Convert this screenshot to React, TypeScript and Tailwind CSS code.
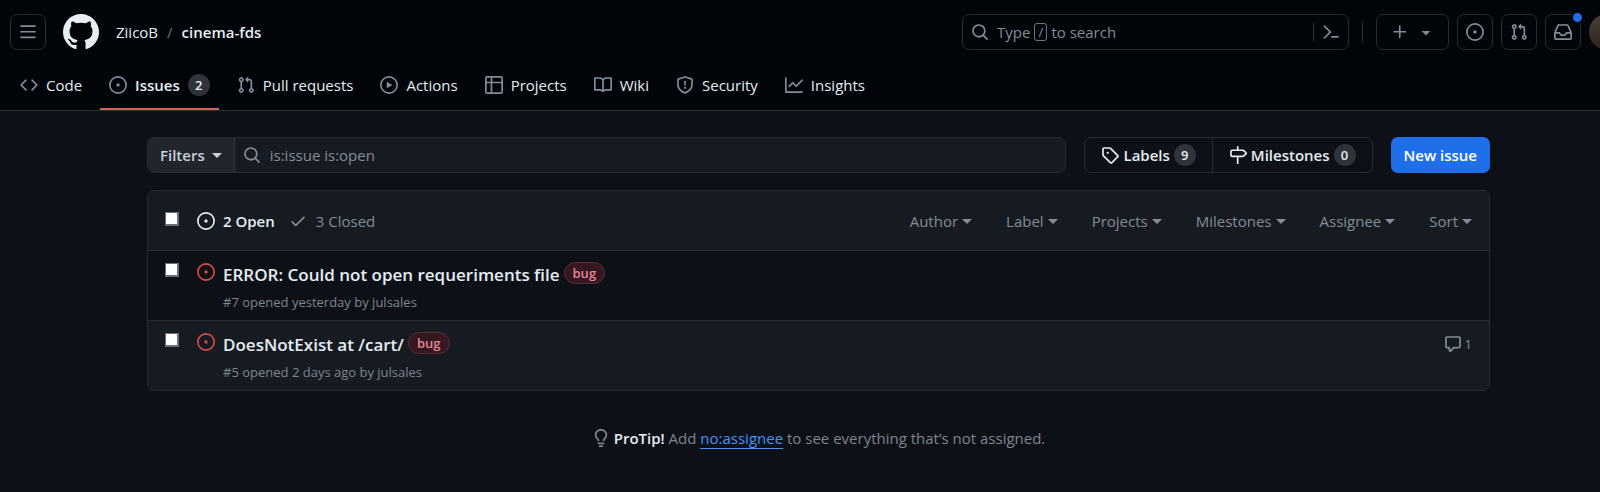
import React from "react";

const paths = {
  mark: "M8 0c4.42 0 8 3.58 8 8a8.013 8.013 0 0 1-5.45 7.59c-.4.08-.55-.17-.55-.38 0-.27.01-1.13.01-2.2 0-.75-.25-1.23-.54-1.48 1.78-.2 3.65-.88 3.65-3.95 0-.88-.31-1.59-.82-2.15.08-.2.36-1.02-.08-2.12 0 0-.67-.22-2.2.82-.64-.18-1.32-.27-2-.27-.68 0-1.36.09-2 .27-1.53-1.03-2.2-.82-2.2-.82-.44 1.1-.16 1.92-.08 2.12-.51.56-.82 1.28-.82 2.15 0 3.06 1.86 3.75 3.64 3.95-.23.2-.44.55-.51 1.07-.46.21-1.61.55-2.33-.66-.15-.24-.6-.83-1.23-.82-.67.01-.27.38.01.53.34.19.73.9.82 1.13.16.45.68 1.31 2.69.94 0 .67.01 1.3.01 1.49 0 .21-.15.45-.55.38A7.995 7.995 0 0 1 0 8c0-4.42 3.58-8 8-8Z",
  bars: "M1 2.75A.75.75 0 0 1 1.75 2h12.5a.75.75 0 0 1 0 1.5H1.75A.75.75 0 0 1 1 2.75Zm0 5A.75.75 0 0 1 1.75 7h12.5a.75.75 0 0 1 0 1.5H1.75A.75.75 0 0 1 1 7.75ZM1.75 12h12.5a.75.75 0 0 1 0 1.5H1.75a.75.75 0 0 1 0-1.5Z",
  code: "m11.28 3.22 4.25 4.25a.75.75 0 0 1 0 1.06l-4.25 4.25a.749.749 0 0 1-1.275-.326.749.749 0 0 1 .215-.734L13.94 8l-3.72-3.72a.749.749 0 0 1 .326-1.275.749.749 0 0 1 .734.215Zm-6.56 0a.751.751 0 0 1 1.042.018.751.751 0 0 1 .018 1.042L2.06 8l3.72 3.72a.749.749 0 0 1-.326 1.275.749.749 0 0 1-.734-.215L.47 8.53a.75.75 0 0 1 0-1.06Z",
  issue: "M8 9.5a1.5 1.5 0 1 0 0-3 1.5 1.5 0 0 0 0 3ZM8 0a8 8 0 1 1 0 16A8 8 0 0 1 8 0ZM1.5 8a6.5 6.5 0 1 0 13 0 6.5 6.5 0 0 0-13 0Z",
  pull: "M1.5 3.25a2.25 2.25 0 1 1 3 2.122v5.256a2.251 2.251 0 1 1-1.5 0V5.372A2.25 2.25 0 0 1 1.5 3.25Zm5.677-.177L9.573.677A.25.25 0 0 1 10 .854V2.5h1A2.5 2.5 0 0 1 13.5 5v5.628a2.251 2.251 0 1 1-1.5 0V5a1 1 0 0 0-1-1h-1v1.646a.25.25 0 0 1-.427.177L7.177 3.427a.25.25 0 0 1 0-.354ZM3.75 2.5a.75.75 0 1 0 0 1.5.75.75 0 0 0 0-1.5Zm0 9.5a.75.75 0 1 0 0 1.5.75.75 0 0 0 0-1.5Zm8.25.75a.75.75 0 1 0 1.5 0 .75.75 0 0 0-1.5 0Z",
  play: "M8 0a8 8 0 1 1 0 16A8 8 0 0 1 8 0ZM1.5 8a6.5 6.5 0 1 0 13 0 6.5 6.5 0 0 0-13 0Zm4.879-2.773 4.264 2.559a.25.25 0 0 1 0 .428l-4.264 2.559A.25.25 0 0 1 6 10.559V5.442a.25.25 0 0 1 .379-.215Z",
  table: "M0 1.75C0 .784.784 0 1.75 0h12.5C15.216 0 16 .784 16 1.75v12.5A1.75 1.75 0 0 1 14.25 16H1.75A1.75 1.75 0 0 1 0 14.25ZM6.5 6.5v8h7.75a.25.25 0 0 0 .25-.25V6.5Zm8-1.5V1.75a.25.25 0 0 0-.25-.25H6.5V5Zm-13 1.5v7.75c0 .138.112.25.25.25H5v-8ZM5 5V1.5H1.75a.25.25 0 0 0-.25.25V5Z",
  book: "M0 1.75A.75.75 0 0 1 .75 1h4.253c1.227 0 2.317.59 3 1.501A3.743 3.743 0 0 1 11.006 1h4.245a.75.75 0 0 1 .75.75v10.5a.75.75 0 0 1-.75.75h-4.507a2.25 2.25 0 0 0-1.591.659l-.622.621a.75.75 0 0 1-1.06 0l-.622-.621A2.25 2.25 0 0 0 5.258 13H.75a.75.75 0 0 1-.75-.75Zm7.251 10.324.004-5.073-.002-2.253A2.25 2.25 0 0 0 5.003 2.5H1.5v9h3.757a3.75 3.75 0 0 1 1.994.574ZM8.755 4.75l-.004 7.322a3.752 3.752 0 0 1 1.992-.572H14.5v-9h-3.495a2.25 2.25 0 0 0-2.25 2.25Z",
  shield: "M7.467.133a1.748 1.748 0 0 1 1.066 0l5.25 1.68A1.75 1.75 0 0 1 15 3.48V7c0 1.566-.32 3.182-1.303 4.682-.983 1.498-2.585 2.813-5.032 3.855a1.697 1.697 0 0 1-1.33 0c-2.447-1.042-4.049-2.357-5.032-3.855C1.32 10.182 1 8.566 1 7V3.48a1.75 1.75 0 0 1 1.217-1.667Zm.61 1.429a.25.25 0 0 0-.153 0l-5.25 1.68a.25.25 0 0 0-.174.238V7c0 1.358.275 2.666 1.057 3.86.784 1.194 2.121 2.34 4.366 3.297a.196.196 0 0 0 .154 0c2.245-.956 3.582-2.104 4.366-3.298C13.225 9.666 13.5 8.36 13.5 7V3.48a.251.251 0 0 0-.174-.237l-5.25-1.68ZM8.75 4.75v3a.75.75 0 0 1-1.5 0v-3a.75.75 0 0 1 1.5 0ZM9 10.5a1 1 0 1 1-2 0 1 1 0 0 1 2 0Z",
  graph: "M1.5 1.75V13.5h13.75a.75.75 0 0 1 0 1.5H.75a.75.75 0 0 1-.75-.75V1.75a.75.75 0 0 1 1.5 0Zm14.28 2.53-5.25 5.25a.75.75 0 0 1-1.06 0L7 7.06 4.28 9.78a.751.751 0 0 1-1.042-.018.751.751 0 0 1-.018-1.042l3.25-3.25a.75.75 0 0 1 1.06 0L10 7.94l4.72-4.72a.751.751 0 0 1 1.042.018.751.751 0 0 1 .018 1.042Z",
  search: "M10.68 11.74a6 6 0 0 1-7.922-8.982 6 6 0 0 1 8.982 7.922l3.04 3.04a.749.749 0 0 1-.326 1.275.749.749 0 0 1-.734-.215ZM11.5 7a4.499 4.499 0 1 0-8.997 0A4.499 4.499 0 0 0 11.5 7Z",
  command: "m6.354 8.04-4.773 4.773a.75.75 0 1 0 1.061 1.06L7.945 8.57a.75.75 0 0 0 0-1.06L2.642 2.206a.75.75 0 0 0-1.06 1.061L6.353 8.04ZM8.75 11.5a.75.75 0 0 0 0 1.5h5.5a.75.75 0 0 0 0-1.5h-5.5Z",
  plus: "M7.75 2a.75.75 0 0 1 .75.75V7h4.25a.75.75 0 0 1 0 1.5H8.5v4.25a.75.75 0 0 1-1.5 0V8.5H2.75a.75.75 0 0 1 0-1.5H7V2.75A.75.75 0 0 1 7.75 2Z",
  triangle: "m4.427 7.427 3.396 3.396a.25.25 0 0 0 .354 0l3.396-3.396A.25.25 0 0 0 11.396 7H4.604a.25.25 0 0 0-.177.427Z",
  inbox: "M2.8 2.06A1.75 1.75 0 0 1 4.41 1h7.18c.7 0 1.333.417 1.61 1.06l2.74 6.395c.04.093.06.194.06.295v4.5A1.75 1.75 0 0 1 14.25 15H1.75A1.75 1.75 0 0 1 0 13.25v-4.5c0-.101.02-.202.06-.295Zm1.61.44a.25.25 0 0 0-.23.152L1.887 8H4.75a.75.75 0 0 1 .6.3L6.625 10h2.75l1.275-1.7a.75.75 0 0 1 .6-.3h2.863L11.82 2.652a.25.25 0 0 0-.23-.152Zm10.09 7h-2.875l-1.275 1.7a.75.75 0 0 1-.6.3h-3.5a.75.75 0 0 1-.6-.3L4.375 9.5H1.5v3.75c0 .138.112.25.25.25h12.5a.25.25 0 0 0 .25-.25Z",
  tag: "M1 7.775V2.75C1 1.784 1.784 1 2.75 1h5.025c.464 0 .91.184 1.238.513l6.25 6.25a1.75 1.75 0 0 1 0 2.474l-5.026 5.026a1.75 1.75 0 0 1-2.474 0l-6.25-6.25A1.752 1.752 0 0 1 1 7.775Zm1.5 0c0 .066.026.13.073.177l6.25 6.25a.25.25 0 0 0 .354 0l5.025-5.025a.25.25 0 0 0 0-.354l-6.25-6.25a.25.25 0 0 0-.177-.073H2.75a.25.25 0 0 0-.25.25ZM6 5a1 1 0 1 1 0 2 1 1 0 0 1 0-2Z",
  milestone: "M7.75 0a.75.75 0 0 1 .75.75V3h3.634c.414 0 .814.147 1.13.414l2.07 1.75a1.75 1.75 0 0 1 0 2.672l-2.07 1.75a1.75 1.75 0 0 1-1.13.414H8.5v5.25a.75.75 0 0 1-1.5 0V10H2.75A1.75 1.75 0 0 1 1 8.25v-3.5C1 3.784 1.784 3 2.75 3H7V.75A.75.75 0 0 1 7.75 0Zm4.384 8.5a.25.25 0 0 0 .161-.06l2.07-1.75a.248.248 0 0 0 0-.38l-2.07-1.75a.25.25 0 0 0-.161-.06H2.75a.25.25 0 0 0-.25.25v3.5c0 .138.112.25.25.25h9.384Z",
  check: "M13.78 4.22a.75.75 0 0 1 0 1.06l-7.25 7.25a.75.75 0 0 1-1.06 0L2.22 9.28a.751.751 0 0 1 .018-1.042.751.751 0 0 1 1.042-.018L6 10.94l6.72-6.72a.75.75 0 0 1 1.06 0Z",
  comment: "M1 2.75C1 1.784 1.784 1 2.75 1h10.5c.966 0 1.75.784 1.75 1.75v7.5A1.75 1.75 0 0 1 13.25 12H9.06l-2.573 2.573A1.458 1.458 0 0 1 4 13.543V12H2.75A1.75 1.75 0 0 1 1 10.25Zm1.75-.25a.25.25 0 0 0-.25.25v7.5c0 .138.112.25.25.25h2a.75.75 0 0 1 .75.75v2.19l2.72-2.72a.749.749 0 0 1 .53-.22h4.5a.25.25 0 0 0 .25-.25v-7.5a.25.25 0 0 0-.25-.25Z",
  bulb: "M8 1.5c-2.363 0-4 1.69-4 3.75 0 .984.424 1.625.984 2.304l.214.253c.223.264.47.556.673.848.284.411.537.896.621 1.49a.75.75 0 0 1-1.484.211c-.04-.282-.163-.547-.37-.847a8.456 8.456 0 0 0-.542-.68c-.084-.1-.173-.205-.268-.32C3.201 7.75 2.5 6.766 2.5 5.25 2.5 2.31 4.863 0 8 0s5.5 2.31 5.5 5.25c0 1.516-.701 2.5-1.328 3.259-.095.115-.184.22-.268.319-.207.245-.383.453-.541.681-.208.3-.33.565-.37.847a.751.751 0 0 1-1.485-.212c.084-.593.337-1.078.621-1.489.203-.292.45-.584.673-.848.075-.088.147-.173.213-.253.561-.679.985-1.32.985-2.304 0-2.06-1.637-3.75-4-3.75ZM5.75 12h4.5a.75.75 0 0 1 0 1.5h-4.5a.75.75 0 0 1 0-1.5ZM6 15.25a.75.75 0 0 1 .75-.75h2.5a.75.75 0 0 1 0 1.5h-2.5a.75.75 0 0 1-.75-.75Z",
};

type IconName = keyof typeof paths;

function Icon({ name, className = "size-[18px]" }: { name: IconName; className?: string }) {
  return (
    <svg viewBox="0 0 16 16" fill="currentColor" aria-hidden="true" className={`shrink-0 ${className}`}>
      <path d={paths[name]} />
    </svg>
  );
}

function Caret() {
  return <span aria-hidden="true" className="mt-px border-x-[5px] border-t-[5px] border-x-transparent border-t-current" />;
}

function Checkbox({ label, className = "" }: { label: string; className?: string }) {
  return (
    <input
      type="checkbox"
      aria-label={label}
      className={`size-[14px] shrink-0 appearance-none border border-r-2 border-b-2 border-[#6b6f75] bg-white ${className}`}
    />
  );
}

function IconButton({ name, label, children }: { name: IconName; label: string; children?: React.ReactNode }) {
  return (
    <button
      type="button"
      aria-label={label}
      className="relative flex size-9 shrink-0 items-center justify-center rounded-[7px] border border-[#272b31] text-[#848d97]"
    >
      <Icon name={name} />
      {children}
    </button>
  );
}

const tabs: { icon: IconName; label: string; count?: number }[] = [
  { icon: "code", label: "Code" },
  { icon: "issue", label: "Issues", count: 2 },
  { icon: "pull", label: "Pull requests" },
  { icon: "play", label: "Actions" },
  { icon: "table", label: "Projects" },
  { icon: "book", label: "Wiki" },
  { icon: "shield", label: "Security" },
  { icon: "graph", label: "Insights" },
];

const filters = ["Author", "Label", "Projects", "Milestones", "Assignee", "Sort"];

const issues = [
  { id: 7, title: "ERROR: Could not open requeriments file", when: "yesterday", comments: 0 },
  { id: 5, title: "DoesNotExist at /cart/", when: "2 days ago", comments: 1 },
];

function Counter({ value }: { value: number }) {
  return (
    <span className="flex h-[22px] min-w-[22px] items-center justify-center rounded-full bg-[#2f343b] px-1 text-[13px] leading-5 font-semibold text-[#e6edf3]">
      {value}
    </span>
  );
}

function Header() {
  return (
    <header className="overflow-hidden border-b border-[#2b3036] bg-[#010409]">
      <div className="flex items-center pt-[14px] pl-[10px]">
        <IconButton name="bars" label="Open menu" />
        <a href="#home" aria-label="Homepage" className="ml-[17px] text-[#e6edf3]">
          <Icon name="mark" className="size-9" />
        </a>
        <nav aria-label="Breadcrumb" className="ml-[17px] flex items-center gap-[9px]">
          <a href="#owner">ZiicoB</a>
          <span className="text-[#6e7681]">/</span>
          <a href="#repo" className="font-semibold">cinema-fds</a>
        </nav>
        <div className="ml-auto flex h-9 w-[387px] shrink-0 items-center rounded-[7px] border border-[#272b31] text-[#848d97]">
          <button type="button" className="flex flex-1 items-center gap-2 pl-2 text-left">
            <Icon name="search" />
            <span className="flex items-center gap-1">
              Type
              <kbd className="flex h-[18px] w-[13px] items-center justify-center rounded-[3px] border border-[#6e7681] font-[inherit] text-[13px]">/</kbd>
              to search
            </span>
          </button>
          <button type="button" aria-label="Command palette" className="flex h-[18px] items-center border-l border-[#30363d] px-2">
            <Icon name="command" />
          </button>
        </div>
        <div className="mx-[13px] h-[22px] w-px shrink-0 bg-[#272b31]" />
        <div className="flex shrink-0 items-center gap-2">
          <button
            type="button"
            aria-label="Create new"
            className="flex h-9 w-[73px] items-center justify-center gap-2 rounded-[7px] border border-[#272b31] text-[#848d97]"
          >
            <Icon name="plus" />
            <Icon name="triangle" />
          </button>
          <IconButton name="issue" label="Your issues" />
          <IconButton name="pull" label="Your pull requests" />
          <IconButton name="inbox" label="Notifications">
            <span className="absolute -top-[4px] -right-[4px] size-[13px] rounded-full border-2 border-[#010409] bg-[#1f6feb]" />
          </IconButton>
        </div>
        <button
          type="button"
          aria-label="Open user menu"
          className="-mr-[25px] ml-2 size-9 shrink-0 rounded-full bg-linear-to-b from-[#4a3f38] to-[#2c2420]"
        />
      </div>
      <nav aria-label="Repository" className="mt-[9px] flex gap-[9px] px-[11px]">
        {tabs.map((tab) => (
          <a
            key={tab.label}
            href={`#${tab.label.toLowerCase().replace(" ", "-")}`}
            className={`flex h-[51px] items-center gap-2 border-b-2 px-[9px] pt-[2px] ${
              tab.count ? "border-[#c9695a] font-semibold" : "border-transparent"
            }`}
          >
            <Icon name={tab.icon} className="size-[18px] text-[#848d97]" />
            {tab.label}
            {tab.count ? <Counter value={tab.count} /> : null}
          </a>
        ))}
      </nav>
    </header>
  );
}

export default function App() {
  return (
    <div className="min-h-screen bg-[#0d1117] font-['Open_Sans','Noto_Sans',sans-serif] text-[15px] leading-6 text-[#e6edf3]">
      <Header />
      <main className="pt-[26px] pr-[110px] pb-9 pl-[147px]">
        <div className="flex items-stretch gap-[18px]">
          <form className="flex h-9 flex-1 overflow-hidden rounded-[7px] border border-[#272c33]">
            <button
              type="button"
              className="flex items-center gap-[7px] border-r border-[#30363d] bg-[#21262d] px-3 font-semibold text-[#c9d1d9]"
            >
              Filters
              <Caret />
            </button>
            <label className="flex flex-1 items-center gap-[9px] bg-[#161b22] pl-2 text-[#848d97]">
              <Icon name="search" />
              <span className="hidden">Search all issues</span>
              <input
                type="text"
                aria-label="Search all issues"
                defaultValue="is:issue is:open"
                className="h-full min-w-0 flex-1 bg-transparent outline-none"
              />
            </label>
          </form>
          <nav aria-label="Issue metadata" className="flex rounded-[7px] border border-[#272c33] font-semibold">
            <a href="#labels" className="flex items-center gap-1 border-r border-[#272c33] px-4">
              <Icon name="tag" />
              Labels
              <Counter value={9} />
            </a>
            <a href="#milestones" className="flex items-center gap-1 px-4">
              <Icon name="milestone" />
              Milestones
              <Counter value={0} />
            </a>
          </nav>
          <a href="#new" className="flex items-center rounded-[7px] bg-[#1f6feb] px-[13px] font-semibold text-white">
            New issue
          </a>
        </div>

        <section aria-label="Issues" className="mt-[17px] overflow-hidden rounded-[7px] border border-[#272c33]">
          <div className="flex h-[59px] items-center bg-[#161b22] px-[17px]">
            <Checkbox label="Select all issues" className="mb-1" />
            <a href="#open" className="ml-[18px] flex items-center gap-2 font-semibold">
              <Icon name="issue" />
              2 Open
            </a>
            <a href="#closed" className="ml-[14px] flex items-center gap-[9px] text-[#848d97]">
              <Icon name="check" />
              3 Closed
            </a>
            <div className="ml-auto flex gap-[34px] text-[#848d97]">
              {filters.map((filter) => (
                <button key={filter} type="button" className="flex items-center gap-1">
                  {filter}
                  <Caret />
                </button>
              ))}
            </div>
          </div>
          <ul>
            {issues.map((issue) => (
              <li key={issue.id} className="flex h-[70px] items-start border-t border-[#272c33] px-[17px] pt-[11px] even:bg-[#161b22]">
                <Checkbox label={`Select issue ${issue.id}`} className="mt-px" />
                <Icon name="issue" className="mt-px ml-[18px] size-[18px] text-[#da4b48]" />
                <div className="ml-2">
                  <div className="flex items-center gap-1">
                    <a href={`#issue-${issue.id}`} className="text-[17px] leading-[26px] font-semibold">
                      {issue.title}
                    </a>
                    <a
                      href="#bug"
                      className="mb-1 flex h-[22px] items-center rounded-full border border-[#5b2d39] bg-[#35181f] px-2 text-[13px] leading-5 font-semibold text-[#e5849a]"
                    >
                      bug
                    </a>
                  </div>
                  <p className="mt-1 text-[13px] leading-5 text-[#7d8590]">
                    #{issue.id} opened {issue.when} by <a href="#julsales">julsales</a>
                  </p>
                </div>
                {issue.comments > 0 && (
                  <a href="#comments" aria-label="1 comment" className="ml-auto flex items-center gap-[3px] text-[13px] text-[#848d97]">
                    <Icon name="comment" />
                    {issue.comments}
                  </a>
                )}
              </li>
            ))}
          </ul>
        </section>

        <p className="mt-[35px] flex items-center justify-center gap-1 text-[#7d8590]">
          <Icon name="bulb" />
          <span>
            <strong className="font-semibold text-[#e6edf3]">ProTip!</strong> Add{" "}
            <a href="#no-assignee" className="text-[#4493f8] underline underline-offset-4">
              no:assignee
            </a>{" "}
            to see everything that’s not assigned.
          </span>
        </p>
      </main>
    </div>
  );
}
